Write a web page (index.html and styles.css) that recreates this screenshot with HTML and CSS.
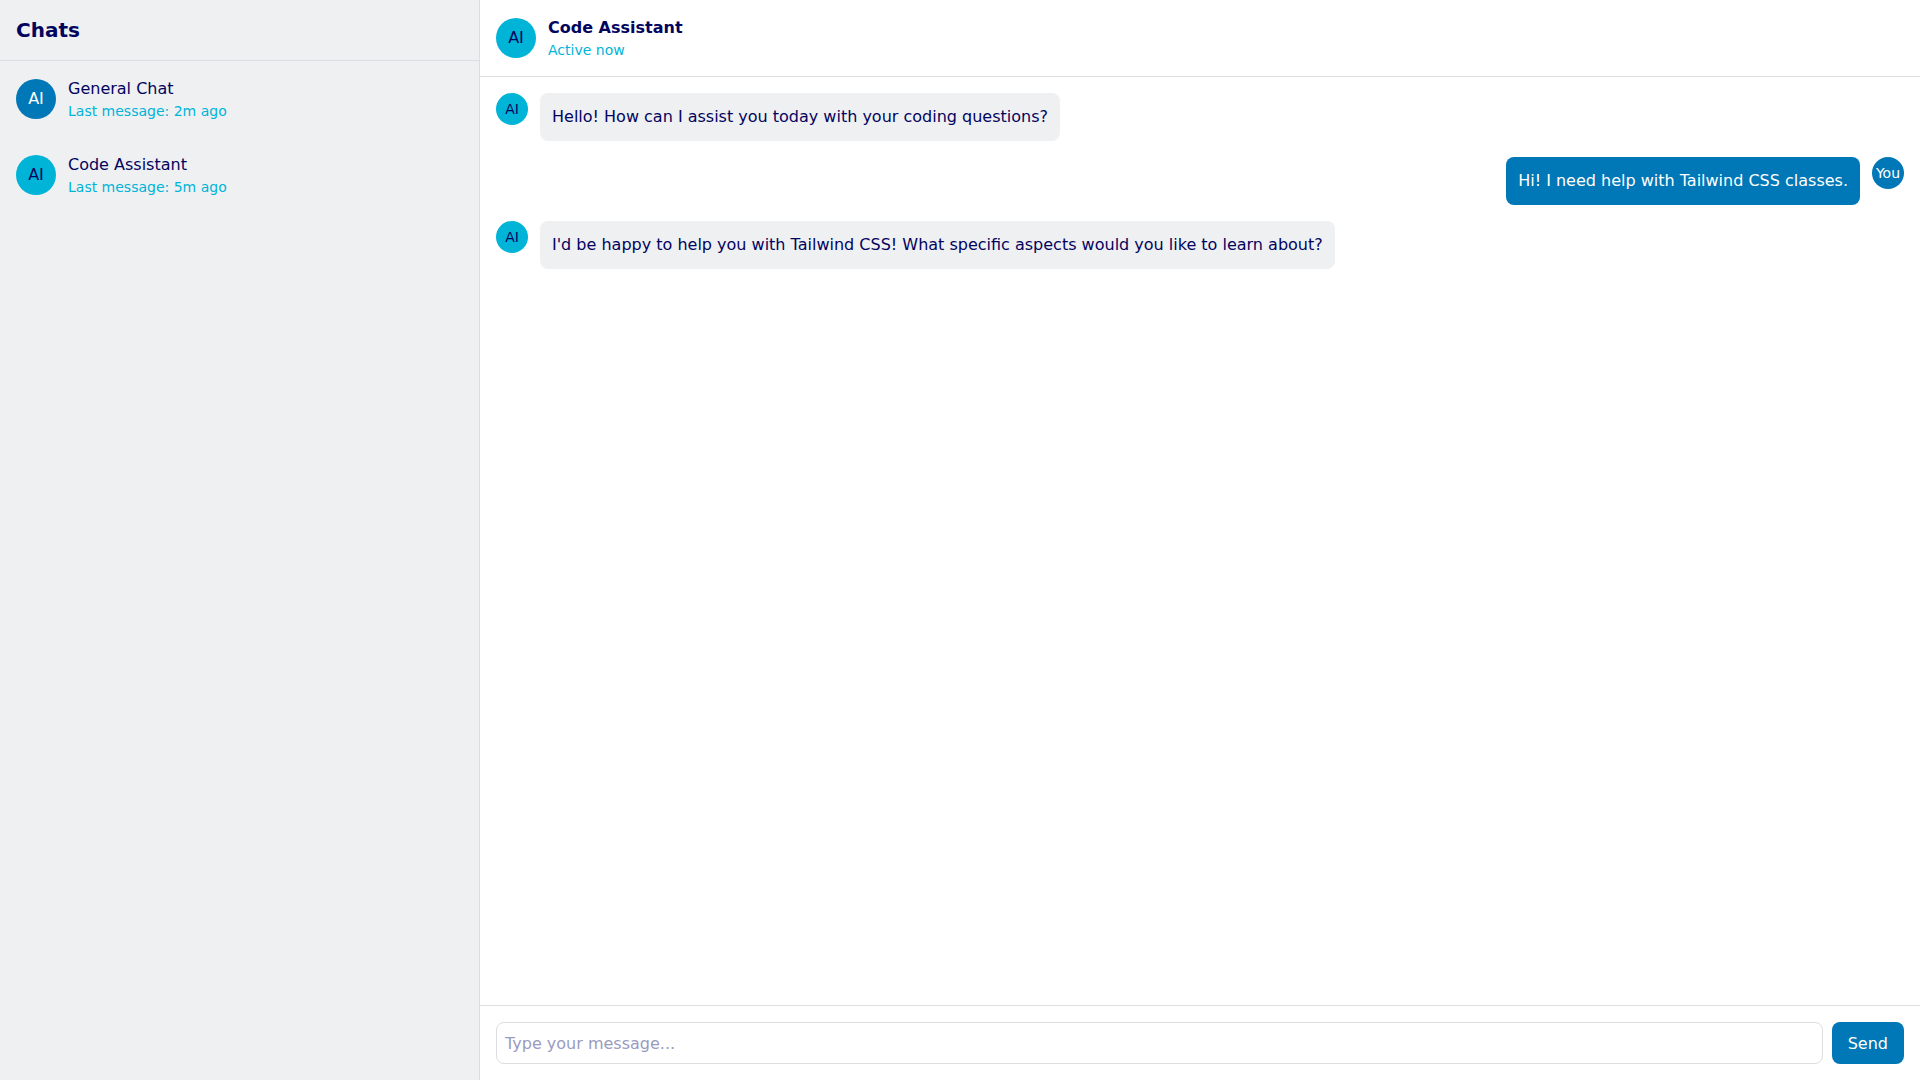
FILE: index.html
```html
<!DOCTYPE html>
<html lang="en">
<head>
<meta charset="utf-8">
<title>Chats</title>
<link rel="stylesheet" href="styles.css">
</head>
<body>
<div class="app">
  <aside class="sidebar">
    <div class="sidebar-head"><h1 class="sidebar-title">Chats</h1></div>
    <ul class="chat-list">
      <li class="chat-item">
        <div class="avatar avatar-lg avatar-blue">AI</div>
        <div class="chat-meta">
          <div class="chat-name">General Chat</div>
          <div class="chat-sub">Last message: 2m ago</div>
        </div>
      </li>
      <li class="chat-item">
        <div class="avatar avatar-lg avatar-cyan">AI</div>
        <div class="chat-meta">
          <div class="chat-name">Code Assistant</div>
          <div class="chat-sub">Last message: 5m ago</div>
        </div>
      </li>
    </ul>
  </aside>
  <main class="main">
    <header class="main-head">
      <div class="avatar avatar-lg avatar-cyan">AI</div>
      <div class="chat-meta">
        <div class="head-name">Code Assistant</div>
        <div class="chat-sub">Active now</div>
      </div>
    </header>
    <section class="messages">
      <div class="msg">
        <div class="avatar avatar-sm avatar-cyan">AI</div>
        <div class="bubble bubble-ai">Hello! How can I assist you today with your coding questions?</div>
      </div>
      <div class="msg msg-user">
        <div class="bubble bubble-user">Hi! I need help with Tailwind CSS classes.</div>
        <div class="avatar avatar-sm avatar-blue">You</div>
      </div>
      <div class="msg">
        <div class="avatar avatar-sm avatar-cyan">AI</div>
        <div class="bubble bubble-ai">I'd be happy to help you with Tailwind CSS! What specific aspects would you like to learn about?</div>
      </div>
    </section>
    <footer class="composer">
      <input class="composer-input" type="text" placeholder="Type your message...">
      <button class="send-btn" type="button">Send</button>
    </footer>
  </main>
</div>
</body>
</html>
```

FILE: styles.css
```css
* { box-sizing: border-box; }
html, body {
  margin: 0;
  padding: 0;
  height: 100%;
}
body {
  font-family: "DejaVu Sans", "Liberation Sans", sans-serif;
  color: #03045e;
  background: #ffffff;
  font-size: 16px;
  line-height: 24px;
}
.app {
  display: flex;
  height: 100vh;
  overflow: hidden;
}
.sidebar {
  width: 480px;
  flex: 0 0 480px;
  background: #eff0f2;
  border-right: 1px solid #dcdde1;
  display: flex;
  flex-direction: column;
}
.sidebar-head {
  padding: 16px;
  border-bottom: 1px solid #dcdde1;
}
.sidebar-title {
  margin: 0;
  font-size: 20px;
  line-height: 28px;
  font-weight: 700;
  color: #03045e;
}
.chat-list {
  list-style: none;
  margin: 0;
  padding: 0;
}
.chat-item {
  display: flex;
  align-items: center;
  gap: 12px;
  padding: 16px;
}
.avatar {
  border-radius: 50%;
  display: flex;
  align-items: center;
  justify-content: center;
  flex-shrink: 0;
}
.avatar-lg {
  width: 40px;
  height: 40px;
  font-size: 16px;
}
.avatar-sm {
  width: 32px;
  height: 32px;
  font-size: 14px;
  line-height: 20px;
}
.avatar-blue { background: #0077b6; color: #ffffff; }
.avatar-cyan { background: #00b4d8; color: #03045e; }
.chat-meta {
  display: flex;
  flex-direction: column;
}
.chat-name {
  font-size: 16px;
  line-height: 24px;
}
.head-name {
  font-size: 16px;
  line-height: 24px;
  font-weight: 700;
}
.chat-sub {
  font-size: 14px;
  line-height: 20px;
  color: #00b4d8;
}
.main {
  flex: 1;
  display: flex;
  flex-direction: column;
  min-width: 0;
  background: #ffffff;
}
.main-head {
  display: flex;
  align-items: center;
  gap: 12px;
  padding: 16px;
  border-bottom: 1px solid #dcdde1;
}
.messages {
  flex: 1;
  overflow-y: auto;
  padding: 16px;
  display: flex;
  flex-direction: column;
  gap: 16px;
}
.msg {
  display: flex;
  align-items: flex-start;
  gap: 12px;
}
.msg-user {
  justify-content: flex-end;
}
.bubble {
  padding: 12px;
  border-radius: 8px;
  font-size: 16px;
  line-height: 24px;
}
.bubble-ai {
  background: #eff0f2;
  color: #03045e;
}
.bubble-user {
  background: #0077b6;
  color: #ffffff;
}
.composer {
  display: flex;
  gap: 9px;
  padding: 16px;
  border-top: 1px solid #dcdde1;
}
.composer-input {
  flex: 1;
  height: 42px;
  padding: 8px;
  font-family: inherit;
  font-size: 16px;
  color: #03045e;
  border: 1px solid #dcdde1;
  border-radius: 8px;
  outline: none;
  background: #ffffff;
}
.composer-input::placeholder {
  color: #9a9bbf;
}
.send-btn {
  height: 42px;
  padding: 0 16px;
  font-family: inherit;
  font-size: 16px;
  background: #0077b6;
  color: #ffffff;
  border: none;
  border-radius: 8px;
  cursor: pointer;
}
```
